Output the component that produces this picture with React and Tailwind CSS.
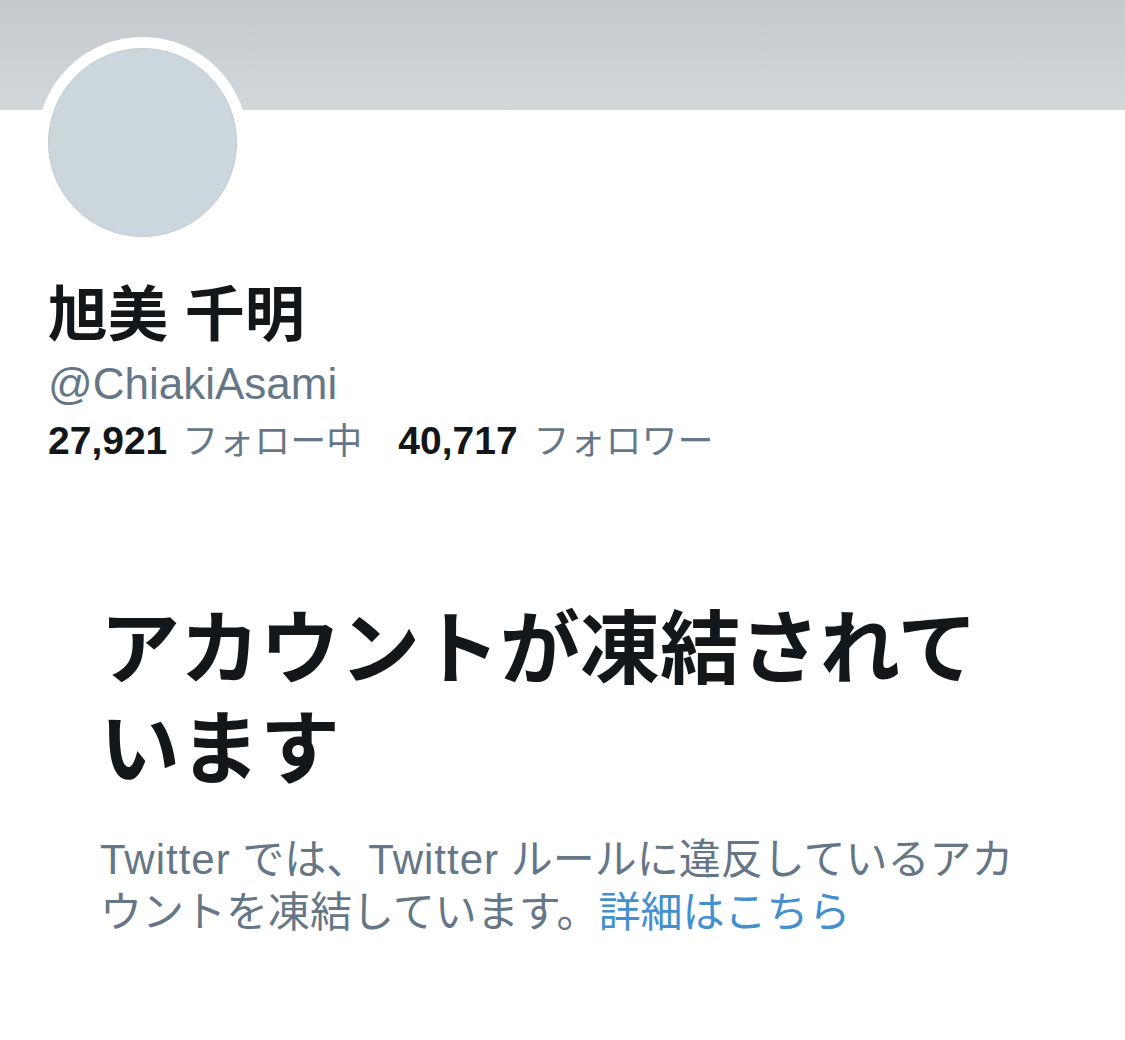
import React from "react";

const jp = { fontFamily: '"Liberation Sans", "Noto Sans CJK JP", sans-serif' };

export default function App() {
	return (
		<div className="w-[1125px] h-[1040px] bg-white overflow-hidden" style={jp}>
			{/* banner */}
			<div className="h-[110px] bg-gradient-to-b from-[#c3c9cd] to-[#d1d7db]" />

			<div className="px-[37px]">
				<div className="-mt-[73px] w-[211px] h-[211px] rounded-full bg-white p-[11px]">
					<div className="w-full h-full rounded-full bg-[#ccd6dd] border border-[#c2cbd2]" />
				</div>

				<div className="pl-[11px]">
					<h1 className="mt-[30px] text-[60px] leading-[76px] font-bold text-[#14171a]">
						旭美 千明
					</h1>
					<p className="mt-[4px] text-[44px] leading-[52px] text-[#657786]">
						@ChiakiAsami
					</p>
					<div className="mt-[7px] flex items-baseline leading-[48px]">
						<span className="text-[39px] font-bold text-[#14171a]">27,921</span>
						<span className="ml-[15px] text-[36px] text-[#657786]">フォロー中</span>
						<span className="ml-[36px] text-[39px] font-bold text-[#14171a]">40,717</span>
						<span className="ml-[16px] text-[36px] text-[#657786]">フォロワー</span>
					</div>
				</div>
			</div>

			<div className="pl-[100px] pr-[60px] mt-[134px]">
				<h2 className="text-[80px] leading-[100px] font-bold text-[#14171a]">
					アカウントが凍結されて
					<br />
					います
				</h2>
				<p className="mt-[33px] text-[42px] leading-[53px] text-[#657786]">
					<span className="tracking-[1px]">Twitter</span> では、
					<span className="tracking-[1px]">Twitter</span> ルールに違反しているアカ
					<br />
					ウントを凍結しています。
					<span className="text-[#4390cf]">詳細はこちら</span>
				</p>
			</div>
		</div>
	);
}
